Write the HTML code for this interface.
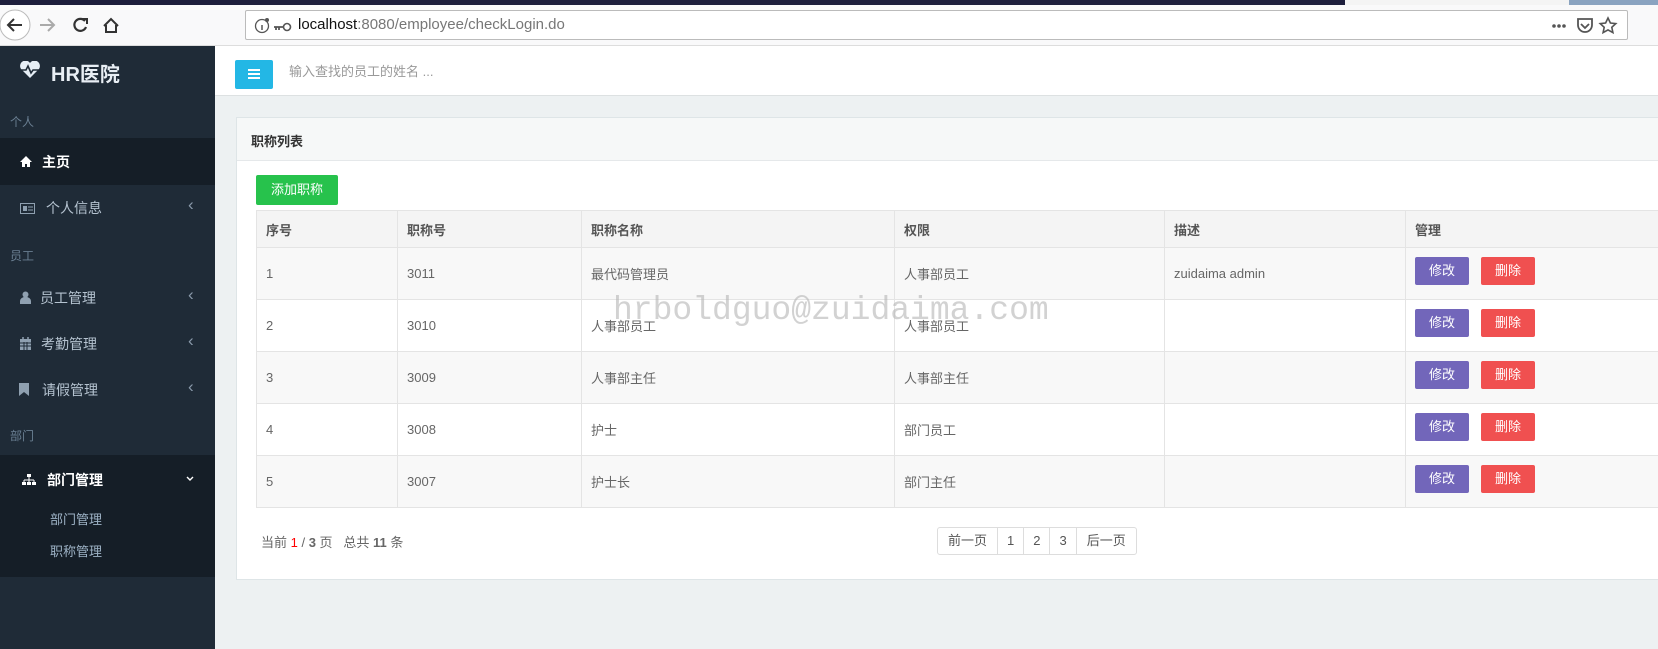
<!DOCTYPE html>
<html><head><meta charset="utf-8"><style>
*{box-sizing:border-box;margin:0;padding:0}
body{width:1658px;height:649px;overflow:hidden;background:#edf1f2;font-family:"Liberation Sans","Noto Sans CJK SC",sans-serif;position:relative}
.abs{position:absolute}
.tabs{left:0;top:0;width:1658px;height:5px;background:#1d1e3c}
.tabs .l{position:absolute;left:1345px;top:0;width:224px;height:5px;background:#f4f4f4}
.tabs .r{position:absolute;left:1569px;top:0;width:89px;height:5px;background:#8aa3c0}
.tb{left:0;top:5px;width:1658px;height:41px;background:#f9f9fa;border-bottom:1px solid #ddd}
.url{left:245px;top:10px;width:1383px;height:30px;background:#fff;border:1px solid #bbb;border-radius:2px}
.url span{position:absolute;left:52px;top:5px;font-size:15px;color:#777}
.side{left:0;top:46px;width:215px;height:603px;background:#1f2b37}
.hdr{left:215px;top:46px;width:1443px;height:50px;background:#fff;border-bottom:1px solid #dde1e2}
.sec{position:absolute;left:10px;font-size:12px;color:#6a7f92}
.mi{position:absolute;left:0;width:215px;font-size:14px;color:#b5c3d0}
.mi .t{position:absolute;left:46px}
.mi .c{position:absolute;left:188px;top:-3px;font-size:17px;color:#8a9aab}
.card{left:236px;top:117px;width:1430px;height:463px;background:#fff;border:1px solid #dee5e7}
.card .h{height:43px;background:#f6f8f8;border-bottom:1px solid #e5e8ea;font-size:13px;font-weight:bold;color:#333;padding:13px 14px}
table{position:absolute;left:256px;top:210px;border-collapse:collapse;font-size:13px;color:#666;table-layout:fixed;width:1424px}
td,th{border:1px solid #e4e4e4;text-align:left;padding:0 9px;font-weight:normal}
th{height:37px;background:#f4f4f4;color:#555;font-weight:bold}
td{height:52px}
tr.o td{background:#f8f8f8}
.b{display:inline-block;width:54px;height:28px;line-height:28px;text-align:center;color:#fff;border-radius:2px;font-size:13px;position:relative;top:-3px;vertical-align:middle}
.pg{left:937px;top:527px;height:28px;border:1px solid #ddd;border-radius:3px;display:flex;font-size:13px;color:#555;background:#fff}
.pg div{padding:0 10px;line-height:26px;border-left:1px solid #ddd}
.pg div.n{padding:0 9px}
.pg div:first-child{border-left:none}
</style></head><body>
<div class="abs tabs"><div class="l"></div><div class="r"></div></div>
<div class="abs tb">
<svg class="abs" style="left:0;top:2px" width="160" height="36" viewBox="0 0 160 36"><circle cx="15" cy="18" r="15" fill="#fff" stroke="#bbb"/><path d="M22 18H8M14 12l-6 6 6 6" stroke="#333" stroke-width="2" fill="none"/><path d="M54 18H40M48 12l6 6-6 6" stroke="#aaa" stroke-width="2" fill="none"/><path d="M85 14a6 6 0 1 0 1 6" stroke="#333" stroke-width="2.2" fill="none"/><path d="M82 12h5v5" stroke="#333" stroke-width="2" fill="none"/><path d="M104 19l7-7 7 7M106 18v7h10v-7" stroke="#333" stroke-width="2" fill="none"/></svg>
</div>
<div class="abs url"><svg class="abs" style="left:8px;top:6px" width="40" height="18"><circle cx="8" cy="9" r="6.5" fill="none" stroke="#555" stroke-width="1.3"/><path d="M8 8v5" stroke="#555" stroke-width="1.5"/><circle cx="13" cy="3" r="2" fill="#555"/><circle cx="33" cy="10" r="3.5" fill="none" stroke="#555" stroke-width="1.6"/><path d="M20 10h10M22 10v3M25 10v3" stroke="#555" stroke-width="1.8"/></svg><span><b style="color:#111;font-weight:normal">localhost</b>:8080/employee/checkLogin.do</span>
<svg class="abs" style="right:4px;top:4px" width="90" height="22"><circle cx="21" cy="11" r="1.8" fill="#555"/><circle cx="26" cy="11" r="1.8" fill="#555"/><circle cx="31" cy="11" r="1.8" fill="#555"/><path d="M45 4h14v6a7 7 0 0 1-14 0z" fill="none" stroke="#555" stroke-width="1.8"/><path d="M48 9l4 4 4-4" stroke="#555" stroke-width="1.8" fill="none"/><path d="M75 3l2.4 5 5.4.6-4 3.7 1.1 5.3-4.9-2.7-4.9 2.7 1.1-5.3-4-3.7 5.4-.6z" fill="none" stroke="#555" stroke-width="1.6"/></svg></div>
<div class="abs side">
<svg class="abs" style="left:19px;top:15px" width="22" height="18" viewBox="0 0 22 18"><path d="M11 17L2 8a5 5 0 0 1 9-6 5 5 0 0 1 9 6z" fill="#e6eef5"/><path d="M2 9h5l2-4 3 7 2-3h6" stroke="#1f2b37" stroke-width="1.6" fill="none"/></svg>
<div class="abs" style="left:51px;top:12px;font-size:20px;font-weight:bold;color:#e8eef4">HR医院</div>
<div class="sec" style="top:67px">个人</div>
<div class="mi" style="top:92px;height:47px;background:#151e27;color:#fff;font-weight:bold"><svg class="abs" style="left:20px;top:18px" width="12" height="11"><path d="M6 0L0 6h2v5h3V8h2v3h3V6h2z" fill="#fff"/></svg><span class="t" style="left:42px;top:14px">主页</span></div>
<div class="mi" style="top:152px"><svg class="abs" style="left:20px;top:5px" width="15" height="11"><rect x=".5" y=".5" width="14" height="10" fill="none" stroke="#8fa0b0"/><rect x="3" y="3" width="4" height="5" fill="#8fa0b0"/><path d="M8 4h5M8 7h5" stroke="#8fa0b0"/></svg><span class="t">个人信息</span><span class="c">‹</span></div>
<div class="sec" style="top:201px">员工</div>
<div class="mi" style="top:242px"><svg class="abs" style="left:20px;top:3px" width="11" height="13"><circle cx="5.5" cy="3.5" r="3" fill="#8fa0b0"/><path d="M0 13v-3a4 3 0 0 1 11 0v3z" fill="#8fa0b0"/></svg><span class="t" style="left:40px">员工管理</span><span class="c">‹</span></div>
<div class="mi" style="top:288px"><svg class="abs" style="left:20px;top:3px" width="11" height="13"><rect y="2" width="11" height="11" fill="#8fa0b0"/><path d="M3 0v3M8 0v3" stroke="#8fa0b0" stroke-width="1.5"/><path d="M0 6h11M4 5v8M7 5v8M0 9h11" stroke="#1f2b37"/></svg><span class="t" style="left:41px">考勤管理</span><span class="c">‹</span></div>
<div class="mi" style="top:334px"><svg class="abs" style="left:19px;top:3px" width="10" height="13"><path d="M0 0h10v13L5 9 0 13z" fill="#8fa0b0"/></svg><span class="t" style="left:42px">请假管理</span><span class="c">‹</span></div>
<div class="sec" style="top:381px">部门</div>
<div class="abs" style="left:0;top:409px;width:215px;height:122px;background:#151e27"></div>
<div class="mi" style="top:424px;color:#fff;font-weight:bold"><svg class="abs" style="left:22px;top:4px" width="14" height="11"><rect x="5" y="0" width="4" height="3" fill="#fff"/><path d="M7 3v3M2 6h10M2 6v2M12 6v2M7 6v2" stroke="#fff"/><rect x="0" y="8" width="4" height="3" fill="#fff"/><rect x="5" y="8" width="4" height="3" fill="#fff"/><rect x="10" y="8" width="4" height="3" fill="#fff"/></svg><span class="t" style="left:47px">部门管理</span><svg class="abs" style="left:186px;top:6px" width="8" height="6"><path d="M1 1l3 3 3-3" stroke="#fff" stroke-width="1.4" fill="none"/></svg></div>
<div class="mi" style="top:463px;font-size:13px;color:#9eb3c6"><span class="t" style="left:50px">部门管理</span></div>
<div class="mi" style="top:495px;font-size:13px;color:#9eb3c6"><span class="t" style="left:50px">职称管理</span></div>
</div>
<div class="abs hdr"><div class="abs" style="left:20px;top:14px;width:38px;height:29px;background:#23b7e5;border-radius:2px"><div style="position:absolute;left:13px;top:9px;width:12px;height:2px;background:#fff;box-shadow:0 4px #fff,0 8px #fff"></div></div><div class="abs" style="left:74px;top:15px;font-size:13px;color:#999">输入查找的员工的姓名 ...</div></div>
<div class="abs card"><div class="h">职称列表</div></div>
<div class="abs" style="left:256px;top:175px;width:82px;height:30px;background:#27c24c;color:#fff;font-size:13px;line-height:30px;text-align:center;border-radius:2px">添加职称</div>
<table>
<colgroup><col style="width:141px"><col style="width:184px"><col style="width:313px"><col style="width:270px"><col style="width:241px"><col style="width:275px"></colgroup>
<tr><th>序号</th><th>职称号</th><th>职称名称</th><th>权限</th><th>描述</th><th>管理</th></tr>
<tr class="o"><td>1</td><td>3011</td><td>最代码管理员</td><td>人事部员工</td><td>zuidaima admin</td><td><span class="b" style="background:#7266ba">修改</span><span class="b" style="background:#f05050;margin-left:12px">删除</span></td></tr>
<tr><td>2</td><td>3010</td><td>人事部员工</td><td>人事部员工</td><td></td><td><span class="b" style="background:#7266ba">修改</span><span class="b" style="background:#f05050;margin-left:12px">删除</span></td></tr>
<tr class="o"><td>3</td><td>3009</td><td>人事部主任</td><td>人事部主任</td><td></td><td><span class="b" style="background:#7266ba">修改</span><span class="b" style="background:#f05050;margin-left:12px">删除</span></td></tr>
<tr><td>4</td><td>3008</td><td>护士</td><td>部门员工</td><td></td><td><span class="b" style="background:#7266ba">修改</span><span class="b" style="background:#f05050;margin-left:12px">删除</span></td></tr>
<tr class="o"><td>5</td><td>3007</td><td>护士长</td><td>部门主任</td><td></td><td><span class="b" style="background:#7266ba">修改</span><span class="b" style="background:#f05050;margin-left:12px">删除</span></td></tr>
</table>
<div class="abs" style="left:613px;top:292px;font-family:'Liberation Mono',monospace;font-size:33px;color:rgba(180,180,180,.6)">hrboldguo@zuidaima.com</div>
<div class="abs" style="left:261px;top:532px;font-size:13px;color:#666">当前 <span style="color:#f00">1</span> / <b>3</b> 页 &nbsp; 总共 <b>11</b> 条</div>
<div class="abs pg"><div>前一页</div><div class="n">1</div><div class="n">2</div><div class="n">3</div><div>后一页</div></div>
</body></html>
